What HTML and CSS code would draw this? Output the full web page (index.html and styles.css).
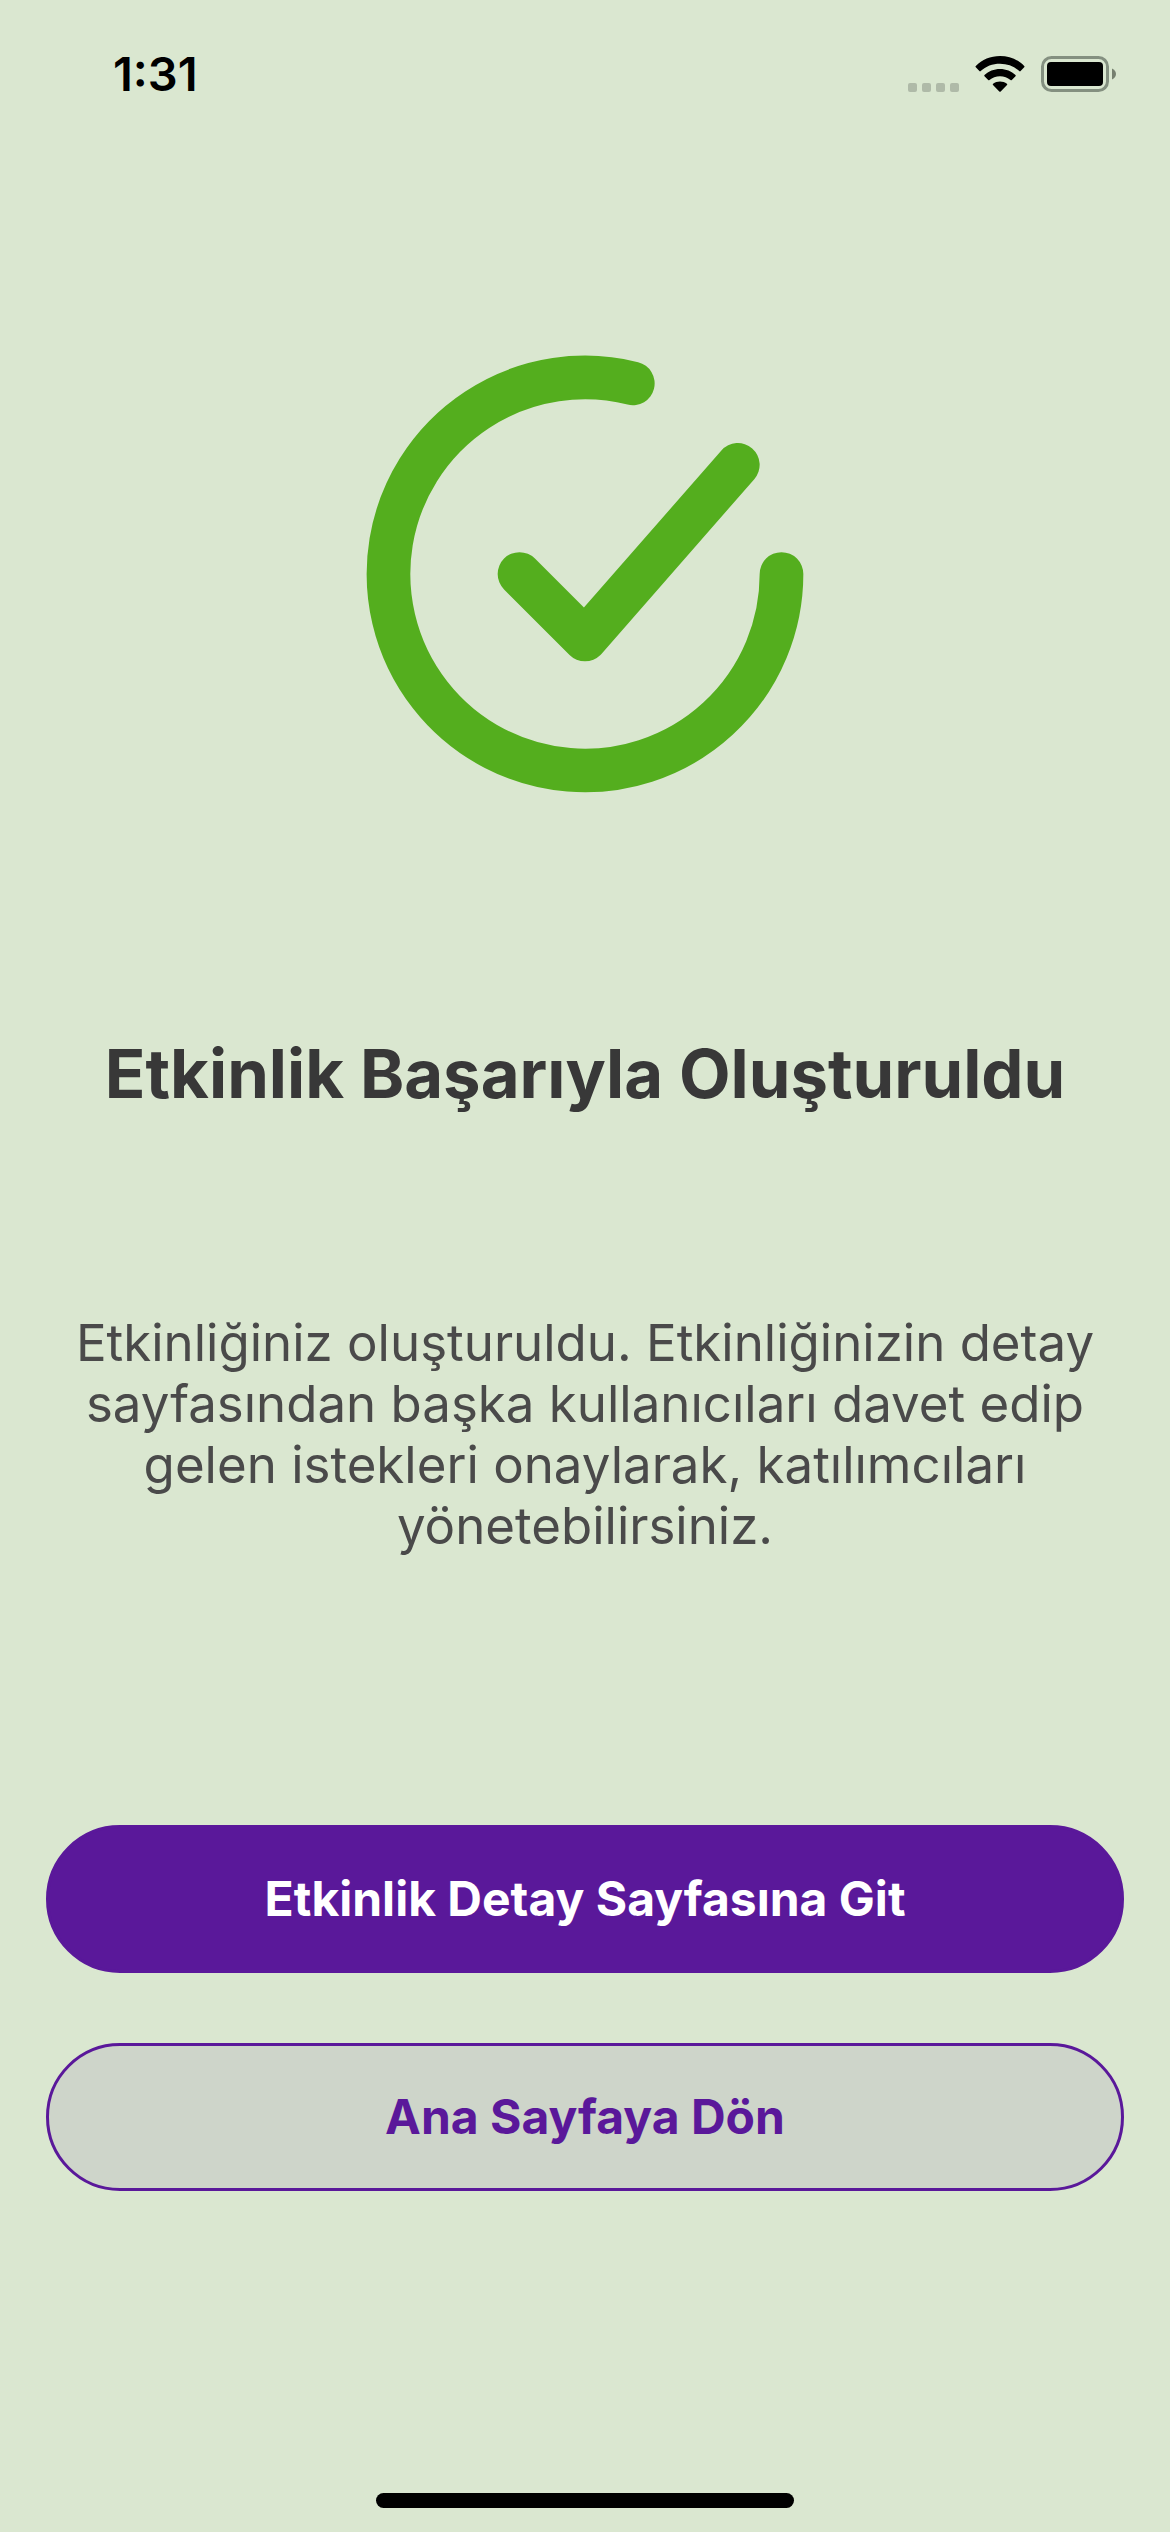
FILE: index.html
```html
<!DOCTYPE html>
<html lang="tr">
<head>
  <meta charset="utf-8">
  <meta name="viewport" content="width=device-width, initial-scale=1">
  <title>Etkinlik Başarıyla Oluşturuldu</title>
  <link rel="stylesheet" href="styles.css">
</head>
<body>
  <div class="screen">
    <header class="status-bar">
      <time class="clock">1:31</time>
      <div class="indicators">
        <svg class="signal" width="51" height="9" viewBox="0 0 51 9" aria-hidden="true">
          <rect width="9" height="9" rx="2"/>
          <rect x="14" width="9" height="9" rx="2"/>
          <rect x="28" width="9" height="9" rx="2"/>
          <rect x="42" width="9" height="9" rx="2"/>
        </svg>
        <svg class="wifi" width="50" height="36" viewBox="0 0 50 36" aria-hidden="true">
          <path d="M25 0C34.500 0 43 3.700 49.200 9.900Q49.900 10.600 49.200 11.300L45.600 15.100Q45 15.700 44.300 15.100C39.200 10.200 32.500 7.700 25 7.700S10.800 10.200 5.700 15.100Q5 15.700 4.400 15.100L.8 11.300Q.1 10.600.8 9.900C7 3.700 15.500 0 25 0Z"/>
          <path d="M25 13C31 13 36.500 15.200 40.500 19Q41.100 19.600 40.500 20.200L36.800 24Q36.200 24.500 35.500 24C32.700 21.700 29 20.300 25 20.300S17.300 21.700 14.500 24Q13.800 24.500 13.200 24L9.500 20.200Q8.900 19.600 9.500 19C13.500 15.200 19 13 25 13Z"/>
          <path d="M25 25.500C27.500 25.500 30 26.300 31.900 27.700Q32.600 28.300 32 28.900L25.700 35.400Q25 36.100 24.300 35.400L18 28.900Q17.400 28.300 18.100 27.700C20 26.300 22.500 25.500 25 25.500Z"/>
        </svg>
        <svg class="battery" width="75" height="36" viewBox="0 0 75 36" aria-hidden="true">
          <rect class="battery-shell" x="1.500" y="1.500" width="65" height="33" rx="9"/>
          <rect x="6" y="6" width="56" height="24" rx="4"/>
          <path class="battery-cap" d="M71 12.500C73.400 13.500 75 15.600 75 18S73.400 22.500 71 23.500Z"/>
        </svg>
      </div>
    </header>

    <main class="content">
      <svg class="success-icon" viewBox="0 0 24 24" aria-hidden="true">
        <path d="M9 12L12 15L19 7"/>
        <path d="M21 12A9 9 0 1 1 14.190 3.270"/>
      </svg>
      <h1 class="title">Etkinlik Başarıyla Oluşturuldu</h1>
      <p class="message">Etkinliğiniz oluşturuldu. Etkinliğinizin detay sayfasından başka kullanıcıları davet edip gelen istekleri onaylarak, katılımcıları yönetebilirsiniz.</p>
      <div class="actions">
        <button class="button button-primary" type="button">Etkinlik Detay Sayfasına Git</button>
        <button class="button button-secondary" type="button">Ana Sayfaya Dön</button>
      </div>
    </main>

    <div class="home-indicator"></div>
  </div>
</body>
</html>
```
FILE: styles.css
```css
* {
  box-sizing: border-box;
}

body {
  margin: 0;
  background: #dae7d0;
  color: #383838;
  font-family: Inter, "Liberation Sans", sans-serif;
}

.screen {
  display: flex;
  flex-direction: column;
  min-height: 100vh;
  padding-bottom: 24px;
}

.status-bar {
  display: flex;
  align-items: center;
  justify-content: space-between;
  height: 148px;
  padding: 0 54px 0 113px;
}

.clock {
  color: #000;
  font-size: 47px;
  font-weight: 600;
  line-height: 56px;
}

.indicators {
  display: flex;
  align-items: flex-end;
  gap: 16px;
}

.signal {
  fill: #afbaa8;
}

.battery-shell {
  fill: none;
  stroke: #849080;
  stroke-width: 3;
}

.battery-cap {
  fill: #76806f;
}

.content {
  display: flex;
  flex: 1;
  flex-direction: column;
  align-items: center;
  padding: 164px 46px 0;
}

.success-icon {
  width: 524px;
  max-width: 100%;
  fill: none;
  stroke: #54ae1e;
  stroke-width: 2;
  stroke-linecap: round;
  stroke-linejoin: round;
}

.title {
  margin: 198px 0 0;
  font-size: 67px;
  font-weight: 700;
  line-height: 80px;
  text-align: center;
}

.message {
  margin: 198px 0 0;
  padding: 0 24px;
  color: #4a4a4a;
  font-size: 51px;
  line-height: 61px;
  text-align: center;
}

.actions {
  display: flex;
  flex-direction: column;
  gap: 70px;
  width: 100%;
  margin-top: 269px;
}

.button {
  width: 100%;
  padding: 42px 24px;
  border: 3px solid #5a189a;
  border-radius: 74px;
  font-family: inherit;
  font-size: 48px;
  font-weight: 700;
  line-height: 58px;
}

.button-primary {
  background: #5a189a;
  color: #fff;
}

.button-secondary {
  background: #ced5ca;
  color: #5a189a;
}

.home-indicator {
  align-self: center;
  width: 418px;
  height: 15px;
  border-radius: 8px;
  background: #000;
}
```
